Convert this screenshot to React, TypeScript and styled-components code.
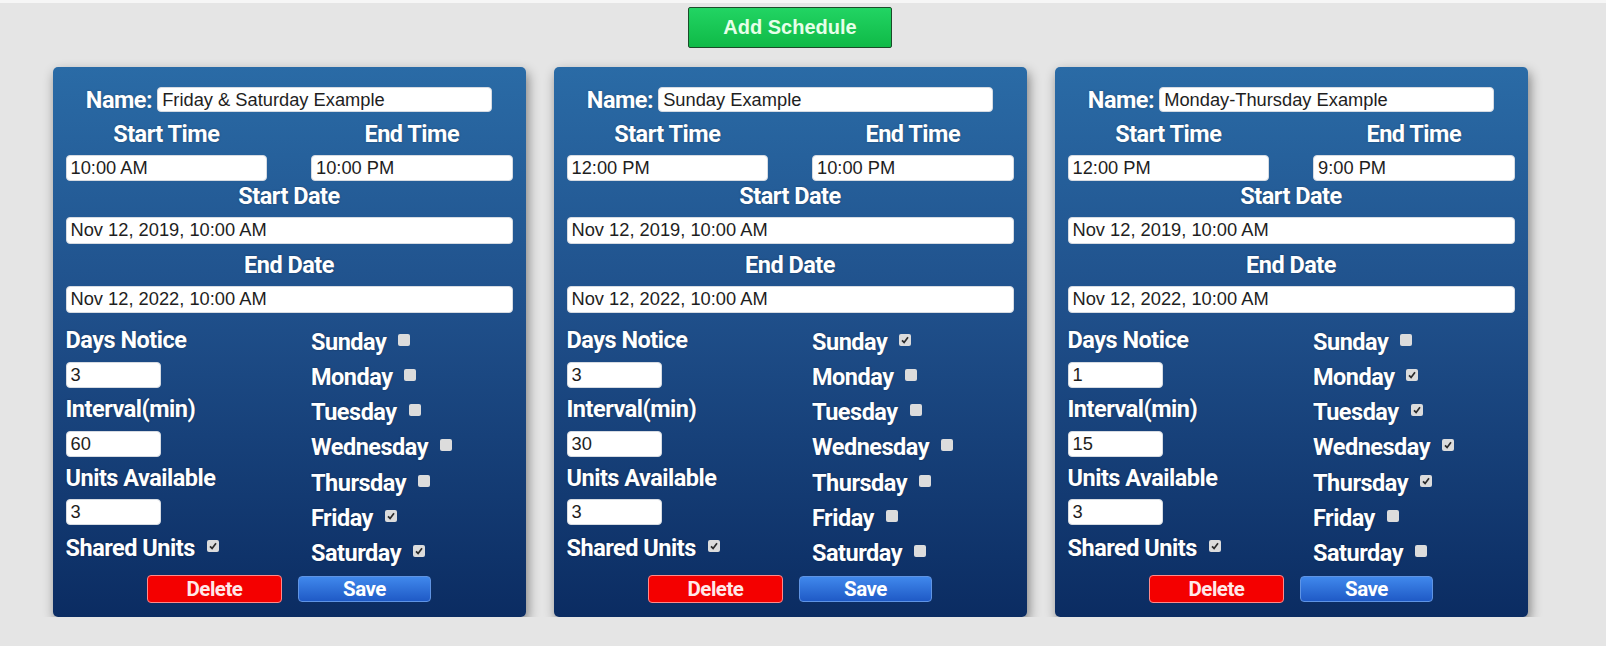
import styled, {createGlobalStyle} from 'styled-components';

type Schedule = {
    name: string,
    startTime: string,
    endTime: string,
    startDate: string,
    endDate: string,
    daysNotice: string,
    interval: string,
    units: string,
    shared: boolean,
    days: boolean[]
};

const DAYS = ['Sunday', 'Monday', 'Tuesday', 'Wednesday', 'Thursday', 'Friday', 'Saturday'];

const schedules: Schedule[] = [
    {
        name: 'Friday & Saturday Example',
        startTime: '10:00 AM',
        endTime: '10:00 PM',
        startDate: 'Nov 12, 2019, 10:00 AM',
        endDate: 'Nov 12, 2022, 10:00 AM',
        daysNotice: '3',
        interval: '60',
        units: '3',
        shared: true,
        days: [false, false, false, false, false, true, true]
    },
    {
        name: 'Sunday Example',
        startTime: '12:00 PM',
        endTime: '10:00 PM',
        startDate: 'Nov 12, 2019, 10:00 AM',
        endDate: 'Nov 12, 2022, 10:00 AM',
        daysNotice: '3',
        interval: '30',
        units: '3',
        shared: true,
        days: [true, false, false, false, false, false, false]
    },
    {
        name: 'Monday-Thursday Example',
        startTime: '12:00 PM',
        endTime: '9:00 PM',
        startDate: 'Nov 12, 2019, 10:00 AM',
        endDate: 'Nov 12, 2022, 10:00 AM',
        daysNotice: '1',
        interval: '15',
        units: '3',
        shared: true,
        days: [false, true, true, true, true, false, false]
    }
];

const GlobalStyle = createGlobalStyle`
  html, body {
    margin: 0;
    background: #e5e5e5;
  }

  body {
    border-top: 3px solid #f6f6f6;
    font-family: Roboto, "Liberation Sans", sans-serif;
  }
`;

function Check({checked}: {checked: boolean}) {
    return (
        <Box>
            {checked && (
                <svg width="10" height="10" viewBox="0 0 10 10">
                    <path d="M2 5.3 L4.1 7.4 L8 2.2" fill="none" stroke="#2b2b2b" strokeWidth="1.7"/>
                </svg>
            )}
        </Box>
    );
}

function ScheduleCard({schedule}: {schedule: Schedule}) {
    return (
        <Card>
            <NameRow>
                <Label>Name:</Label>
                <Field $w={335} $h={25} defaultValue={schedule.name}/>
            </NameRow>

            <TwoCols>
                <Label $h={43}>Start Time</Label>
                <Label $h={43}>End Time</Label>
                <Field $h={26} defaultValue={schedule.startTime}/>
                <Field $h={26} defaultValue={schedule.endTime}/>
            </TwoCols>

            <Label $h={36} $pb={6}>Start Date</Label>
            <Field $h={27} defaultValue={schedule.startDate}/>
            <Label $h={42}>End Date</Label>
            <Field $h={27} defaultValue={schedule.endDate}/>

            <TwoCols $top={6}>
                <Column>
                    <Label $h={43} $left>Days Notice</Label>
                    <Field $w={95} $h={26} defaultValue={schedule.daysNotice}/>
                    <Label $h={43} $left>Interval(min)</Label>
                    <Field $w={95} $h={26} defaultValue={schedule.interval}/>
                    <Label $h={42} $left>Units Available</Label>
                    <Field $w={95} $h={26} defaultValue={schedule.units}/>
                    <CheckRow $h={46}>
                        Shared Units <Check checked={schedule.shared}/>
                    </CheckRow>
                </Column>
                <DayColumn>
                    {DAYS.map((day, i) => (
                        <CheckRow key={day} $h={35.3}>
                            {day} <Check checked={schedule.days[i]}/>
                        </CheckRow>
                    ))}
                </DayColumn>
            </TwoCols>

            <Actions>
                <DeleteButton>Delete</DeleteButton>
                <SaveButton>Save</SaveButton>
            </Actions>
        </Card>
    );
}

export default function App() {
    return (
        <Page>
            <GlobalStyle/>
            <AddButton>Add Schedule</AddButton>
            <Cards>
                {schedules.map(s => <ScheduleCard key={s.name} schedule={s}/>)}
            </Cards>
        </Page>
    );
}

const Page = styled.div`
  width: 1580px;
  padding-top: 4px;
  display: flex;
  flex-direction: column;
  align-items: center;
`;

const AddButton = styled.button`
  width: 204px;
  height: 41px;
  margin-bottom: 19px;
  border: 1px solid #1b4b29;
  border-radius: 2px;
  background: linear-gradient(#22d463, #0fba47);
  color: #e6ffe9;
  font-family: "Liberation Sans", Arial, sans-serif;
  font-weight: bold;
  font-size: 20px;
  cursor: pointer;
`;

const Cards = styled.div`
  display: flex;
  gap: 28px;
`;

const Card = styled.div`
  width: 473px;
  height: 550px;
  box-sizing: border-box;
  padding: 20px 13px 14px;
  border-radius: 5px;
  background: linear-gradient(#2a6ba6 0%, #1f4f8a 45%, #0b2c62 100%);
  box-shadow: 2px 5px 12px rgba(0, 0, 0, 0.45);
  display: flex;
  flex-direction: column;
  color: #fff;
`;

const Label = styled.div<{$h?: number, $pb?: number, $left?: boolean}>`
  height: ${p => p.$h ? `${p.$h}px` : 'auto'};
  padding-bottom: ${p => p.$pb ?? 0}px;
  box-sizing: border-box;
  display: flex;
  align-items: center;
  justify-content: ${p => p.$left ? 'flex-start' : 'center'};
  font-family: Roboto, "Liberation Sans", sans-serif;
  font-weight: 700;
  font-size: 23.5px;
  letter-spacing: -0.5px;
  color: #fff;
  text-shadow: 0 0 2px rgba(0, 0, 0, 0.35);
  white-space: nowrap;
`;

const Field = styled.input<{$w?: number, $h: number}>`
  width: ${p => p.$w ? `${p.$w}px` : '100%'};
  height: ${p => p.$h}px;
  box-sizing: border-box;
  margin: 0;
  padding: 0 4px;
  border: 1px solid #d6dbe2;
  border-radius: 4px;
  background: #fff;
  color: #1e1e1e;
  font-family: "Liberation Sans", Arial, sans-serif;
  font-size: 18.3px;
  outline: none;
`;

const NameRow = styled.div`
  display: flex;
  justify-content: center;
  align-items: center;
  gap: 5px;
  height: 25px;
`;

const TwoCols = styled.div<{$top?: number}>`
  display: grid;
  grid-template-columns: 1fr 1fr;
  column-gap: 44px;
  margin-top: ${p => p.$top ?? 0}px;
`;

const Column = styled.div`
  display: flex;
  flex-direction: column;
`;

const DayColumn = styled.div`
  display: flex;
  flex-direction: column;
  padding-top: 5.4px;
`;

const CheckRow = styled(Label)`
  justify-content: flex-start;
  gap: 12px;
`;

const Box = styled.span`
  width: 12px;
  height: 12px;
  margin-top: -4px;
  border-radius: 2px;
  background: #dcdcdc;
  display: inline-flex;
  align-items: center;
  justify-content: center;
  flex-shrink: 0;
`;

const Actions = styled.div`
  display: flex;
  justify-content: center;
  align-items: center;
  gap: 16px;
  margin-top: 4px;
`;

const ActionButton = styled.button`
  height: 28px;
  border-radius: 4px;
  font-family: Roboto, "Liberation Sans", sans-serif;
  font-weight: 700;
  font-size: 20.5px;
  letter-spacing: -0.5px;
  color: #fff;
  padding: 0;
  cursor: pointer;
`;

const DeleteButton = styled(ActionButton)`
  width: 135px;
  background: #f40000;
  border: 1px solid #ff8a8a;
  color: #ffe8e8;
`;

const SaveButton = styled(ActionButton)`
  width: 133px;
  height: 26px;
  background: linear-gradient(#4088ec, #1f5ac6);
  border: 1px solid #5f94e4;
`;
